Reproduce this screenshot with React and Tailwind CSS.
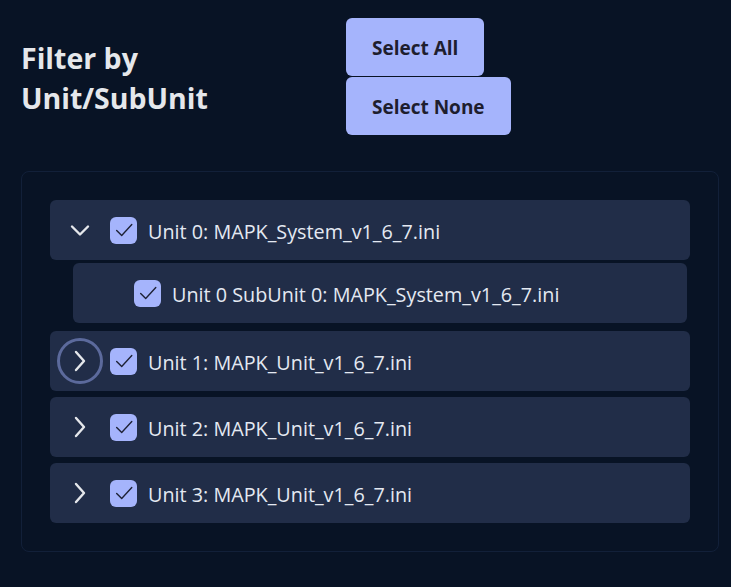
import React from "react";

function Check() {
  return (
    <span className="flex h-[27px] w-[27px] shrink-0 items-center justify-center rounded-[6px] bg-[#a5b4fc]">
      <svg width="22" height="22" viewBox="0 0 24 24" fill="none" stroke="#1e2235" strokeWidth="1.5" strokeLinecap="round" strokeLinejoin="round">
        <path d="M4 12.5l5.5 5.5L20.5 6" />
      </svg>
    </span>
  );
}

function Chevron({ open }) {
  return (
    <svg width="24" height="24" viewBox="0 0 24 24" fill="none" stroke="#e5e7eb" strokeWidth="2.4" strokeLinecap="round" strokeLinejoin="round">
      {open ? <path d="M4 8.5l8 8 8-8" /> : <path d="M8 3l8 9-8 9" />}
    </svg>
  );
}

function UnitRow({ label, open, focused }) {
  return (
    <div className="flex h-[60px] items-center rounded-[6px] bg-[#212d48] pl-[7px]">
      <span className={`flex h-[46px] w-[46px] shrink-0 items-center justify-center rounded-full ${focused ? "border-[3px] border-[#5c6a9c]" : ""}`}>
        <Chevron open={open} />
      </span>
      <span className="ml-[7px]"><Check /></span>
      <span className="ml-[11px] pt-[3px] text-[19.8px] leading-[28px] text-[#e4e9f2]">{label}</span>
    </div>
  );
}

export default function App() {
  return (
    <div className="min-h-[587px] w-full bg-[#081325] px-[21px] pt-[18px] pb-[36px]" style={{ fontFamily: "'Open Sans', 'Noto Sans', sans-serif" }}>
      <div className="flex">
        <h1 className="mt-[20px] w-[325px] text-[28.5px] font-bold leading-[40px] text-[#e5e7eb]">
          Filter by<br />Unit/SubUnit
        </h1>
        <div className="flex flex-col items-start gap-[1px]">
          <button className="h-[58px] rounded-[6px] bg-[#a5b4fc] px-[26px] pt-[2px] text-[19px] font-bold text-[#1e1e2e]">Select All</button>
          <button className="h-[58px] rounded-[6px] bg-[#a5b4fc] px-[26px] pt-[2px] text-[19px] font-bold text-[#1e1e2e]">Select None</button>
        </div>
      </div>
      <div className="mt-[36px] w-[698px] rounded-[8px] border border-[#122039] px-[28px] pt-[28px] pb-[28px]">
        <div className="flex flex-col">
          <UnitRow label="Unit 0: MAPK_System_v1_6_7.ini" open />
          <div className="mt-[3px] ml-[23px] mr-[3px] flex h-[60px] items-center rounded-[6px] bg-[#212d48] pl-[61px]">
            <Check />
            <span className="ml-[11px] pt-[3px] text-[19.8px] leading-[28px] text-[#e4e9f2]">Unit 0 SubUnit 0: MAPK_System_v1_6_7.ini</span>
          </div>
          <div className="mt-[8px]"><UnitRow label="Unit 1: MAPK_Unit_v1_6_7.ini" focused /></div>
          <div className="mt-[6px]"><UnitRow label="Unit 2: MAPK_Unit_v1_6_7.ini" /></div>
          <div className="mt-[6px]"><UnitRow label="Unit 3: MAPK_Unit_v1_6_7.ini" /></div>
        </div>
      </div>
    </div>
  );
}
